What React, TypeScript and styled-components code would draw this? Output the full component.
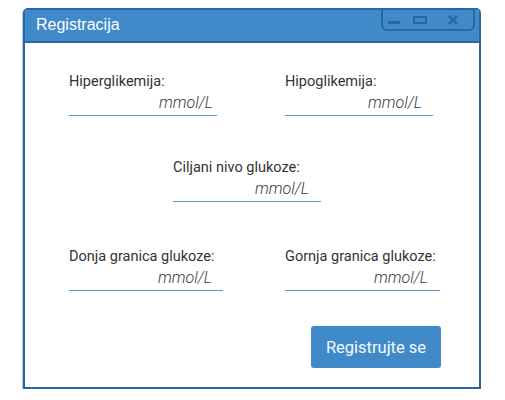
import styled, { createGlobalStyle } from 'styled-components';

const GlobalStyle = createGlobalStyle`
  body {
    margin: 0;
    background: #ffffff;
    font-family: Roboto, "Liberation Sans", Arial, sans-serif;
  }
`;

const Page = styled.div`
  padding: 8px 0 0 23px;
`;

const Window = styled.div`
  width: 458px;
  height: 381px;
  box-sizing: border-box;
  border: 2px solid #2a66a3;
  border-radius: 5px 5px 0 0;
  background: #ffffff;
  box-shadow: -1px 1px 1px rgba(66, 139, 202, 0.45);
  display: flex;
  flex-direction: column;
`;

const TitleBar = styled.div`
  height: 31px;
  flex: none;
  display: flex;
  align-items: flex-start;
  justify-content: space-between;
  background: #418ac9;
  border-bottom: 2px solid #2a66a3;
  border-radius: 3px 3px 0 0;
`;

const Title = styled.span`
  font-family: "Liberation Sans", Arial, sans-serif;
  font-size: 16px;
  color: #ffffff;
  padding: 6px 0 0 11px;
`;

const Controls = styled.div`
  width: 94px;
  height: 21px;
  margin-right: 4px;
  box-sizing: border-box;
  border: 2px solid #2a66a3;
  border-top: none;
  border-radius: 0 0 6px 6px;
  display: flex;
  align-items: center;
  padding: 0 0 0 5px;
  gap: 12px;
`;

const ControlIcon = styled.svg`
  display: block;
  flex: none;
`;

const Body = styled.div`
  flex: 1;
  display: flex;
  flex-direction: column;
  padding: 30px 0 0 44px;
`;

const Row = styled.div<{ $center?: boolean; $gap: number }>`
  display: flex;
  margin-top: ${(p) => p.$gap}px;
  padding-left: ${(p) => (p.$center ? 104 : 0)}px;
`;

const Field = styled.label<{ $width: number }>`
  display: flex;
  flex-direction: column;
  width: ${(p) => p.$width}px;
  margin-right: ${(p) => 216 - p.$width}px;
`;

const Label = styled.span`
  font-size: 14.5px;
  line-height: 17px;
  color: #333333;
  white-space: nowrap;
`;

const Input = styled.input<{ $pad: number }>`
  height: 26px;
  box-sizing: border-box;
  border: none;
  border-bottom: 1px solid #5f9ad3;
  padding: 0 ${(p) => p.$pad}px 0 0;
  outline: none;
  background: transparent;
  text-align: right;
  font-family: Roboto, "Liberation Sans", Arial, sans-serif;
  font-size: 16px;
  font-style: italic;
  font-weight: 300;
  color: #333333;

  &::placeholder {
    color: #3a3a3a;
    opacity: 1;
  }
`;

const Footer = styled.div`
  display: flex;
  justify-content: flex-end;
  margin-top: 35px;
  padding-right: 38px;
`;

const SubmitButton = styled.button`
  width: 130px;
  height: 42px;
  border: none;
  border-radius: 3px;
  background: #418ac9;
  color: #f4f8fc;
  font-family: Roboto, "Liberation Sans", Arial, sans-serif;
  font-size: 16.5px;
  cursor: pointer;
`;

const fields = [
  [
    { label: 'Hiperglikemija:', width: 148, pad: 4 },
    { label: 'Hipoglikemija:', width: 148, pad: 11 },
  ],
  [{ label: 'Ciljani nivo glukoze:', width: 148, pad: 12 }],
  [
    { label: 'Donja granica glukoze:', width: 154, pad: 11 },
    { label: 'Gornja granica glukoze:', width: 155, pad: 12 },
  ],
];

const rowGaps = [0, 43, 46];

export default function App() {
  return (
    <Page>
      <GlobalStyle />
      <Window>
        <TitleBar>
          <Title>Registracija</Title>
          <Controls>
            <ControlIcon width="13" height="8" viewBox="0 0 13 8">
              <rect x="0" y="5" width="12" height="3" fill="#2a66a3" />
            </ControlIcon>
            <ControlIcon width="14" height="8" viewBox="0 0 14 8">
              <rect x="1" y="1" width="12" height="6" fill="none" stroke="#2a66a3" strokeWidth="2" />
            </ControlIcon>
            <ControlIcon width="12" height="10" viewBox="0 0 12 10" style={{ marginLeft: 8 }}>
              <path d="M2 1 L10 9 M10 1 L2 9" stroke="#2a66a3" strokeWidth="2.6" />
            </ControlIcon>
          </Controls>
        </TitleBar>
        <Body>
          {fields.map((row, i) => (
            <Row key={i} $center={row.length === 1} $gap={rowGaps[i]}>
              {row.map((f) => (
                <Field key={f.label} $width={f.width}>
                  <Label>{f.label}</Label>
                  <Input placeholder="mmol/L" $pad={f.pad} />
                </Field>
              ))}
            </Row>
          ))}
          <Footer>
            <SubmitButton>Registrujte se</SubmitButton>
          </Footer>
        </Body>
      </Window>
    </Page>
  );
}
